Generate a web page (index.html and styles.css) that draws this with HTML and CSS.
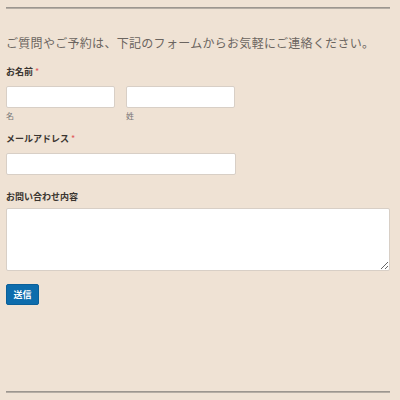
FILE: index.html
```html
<!DOCTYPE html>
<html lang="ja">
<head>
<meta charset="utf-8">
<link rel="stylesheet" href="styles.css">
</head>
<body>
<div class="page">
  <hr class="rule rule-top">
  <p class="intro">ご質問やご予約は、下記のフォームからお気軽にご連絡ください。</p>
  <form class="form">
    <div class="field field-name">
      <div class="label">お名前 <span class="req">*</span></div>
      <div class="name-row">
        <div class="name-col">
          <input class="input" type="text">
          <div class="sub">名</div>
        </div>
        <div class="name-col">
          <input class="input" type="text">
          <div class="sub">姓</div>
        </div>
      </div>
    </div>
    <div class="field">
      <div class="label">メールアドレス <span class="req">*</span></div>
      <input class="input input-email" type="email">
    </div>
    <div class="field">
      <div class="label label-tight">お問い合わせ内容</div>
      <textarea class="textarea"></textarea>
    </div>
    <button class="submit" type="button">送信</button>
  </form>
  <hr class="rule rule-bottom">
</div>
</body>
</html>
```
FILE: styles.css
```css
* { box-sizing: border-box; }
html, body {
  margin: 0;
  padding: 0;
  background: #efe2d4;
}
body {
  font-family: "Noto Sans CJK JP", "Noto Sans", sans-serif;
  color: #333;
}
.page {
  width: 384px;
  margin-left: 6px;
  padding-top: 7px;
}
.rule {
  border: 0;
  border-top: 1px solid #9c968f;
  border-bottom: 1px solid #b5ada4;
  margin: 0;
  height: 0;
}
.intro {
  margin: 25px 0 0;
  font-size: 12px;
  letter-spacing: 0.3px;
  line-height: 18px;
  color: #6b6560;
}
.form {
  margin-top: 14px;
}
.field {
  margin-bottom: 16px;
}
.field-name {
  margin-bottom: 12px;
}
.label {
  font-size: 9px;
  font-weight: bold;
  color: #3a3530;
  line-height: 12px;
  margin-bottom: 8px;
}
.label-tight {
  margin-bottom: 5px;
}
.req {
  color: #e05a5a;
  font-weight: normal;
}
.name-row {
  display: flex;
  gap: 11px;
}
.name-col {
  width: 109px;
}
.input {
  display: block;
  width: 100%;
  height: 22px;
  background: #fff;
  border: 1px solid #d8cfc6;
  border-radius: 2px;
  margin: 0;
  padding: 0 4px;
}
.input-email {
  width: 230px;
}
.sub {
  font-size: 8px;
  color: #777;
  line-height: 10px;
  margin-top: 3px;
}
.textarea {
  display: block;
  width: 384px;
  height: 63px;
  background: #fff;
  border: 1px solid #d8cfc6;
  border-radius: 2px;
  margin: 0;
  resize: vertical;
}
.submit {
  display: block;
  width: 33px;
  height: 21px;
  padding: 0;
  margin-top: -3px;
  background: #0d6cac;
  color: #fff;
  border: 1px solid #0a5f99;
  border-radius: 2px;
  font-family: inherit;
  font-size: 9px;
  font-weight: bold;
}
.rule-bottom {
  margin-top: 86px;
}
```
